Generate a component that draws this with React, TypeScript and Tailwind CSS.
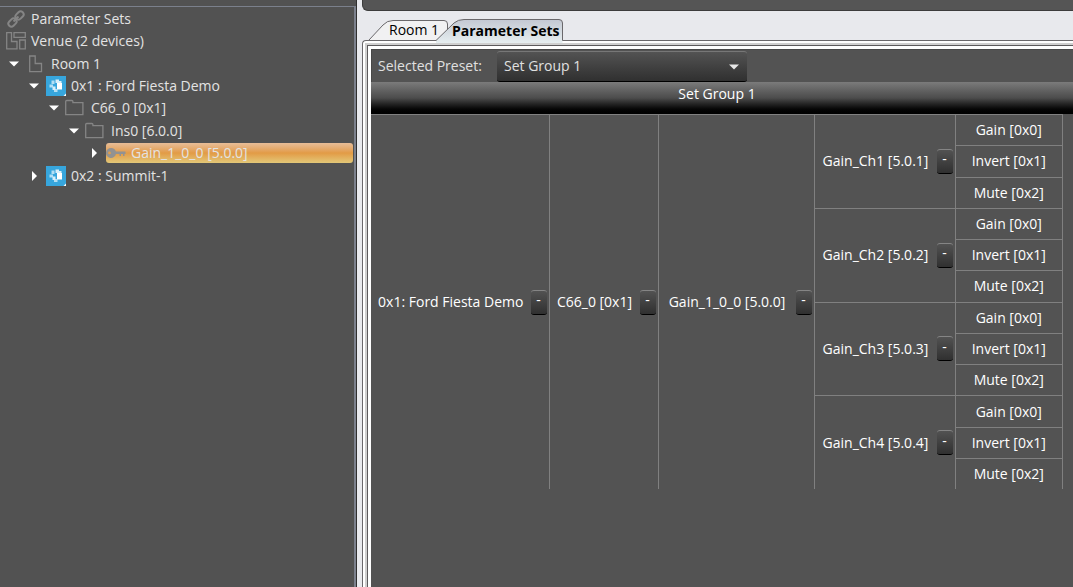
import type { ReactNode } from "react";

const channels = [
	{ name: "Gain_Ch1", address: "5.0.1" },
	{ name: "Gain_Ch2", address: "5.0.2" },
	{ name: "Gain_Ch3", address: "5.0.3" },
	{ name: "Gain_Ch4", address: "5.0.4" },
];

const parameters = ["Gain [0x0]", "Invert [0x1]", "Mute [0x2]"];

/* Icons */

function LinkIcon() {
	return (
		<svg width="20" height="20" viewBox="0 0 20 20" fill="none" stroke="#858585">
			<g transform="rotate(-45 10 10)" strokeWidth="2">
				<rect x="0.5" y="7" width="9" height="6" rx="3" />
				<rect x="10.5" y="7" width="9" height="6" rx="3" />
				<path d="M6.5 10h7" />
			</g>
		</svg>
	);
}

function VenueIcon() {
	return (
		<svg width="20" height="20" viewBox="0 0 20 20" fill="none" stroke="#858585" strokeWidth="1.3">
			<path d="M.7 1.7h4.8v8.8h5.500v7.300H.7z" />
			<path d="M8 1.700h11.300v4.600H8z" />
			<path d="M13.700 9h5.600v8.800h-5.600z" />
		</svg>
	);
}

function RoomIcon() {
	return (
		<svg width="20" height="20" viewBox="0 0 20 20" fill="none" stroke="#858585" strokeWidth="1.3">
			<path d="M5.700 2h5.500v7.500h6.300v8.200H5.700z" />
		</svg>
	);
}

function DeviceIcon() {
	return (
		<svg width="20" height="20" viewBox="0 0 20 20">
			<path fill="#37a6dd" d="M0 0h20v20H0z" />
			<path fill="#fff" d="M20 17.5V20h-2.500z" />
			<path fill="#b4dff4" d="M5.500 4.500h3v3.500h-3zM3.500 8.500h3.500v3H3.500zM8 13h3.500v3H8z" />
			<path fill="#d9effa" d="M9.500 3.500h3.500v3.500H9.500zM6.500 10.500h3v3.500h-3zM13 5h2.500v2H13z" />
			<path fill="#fff" d="M11 7h5v6.500h-5z" />
		</svg>
	);
}

function FolderIcon() {
	return (
		<svg width="20" height="20" viewBox="0 0 20 20" fill="none" stroke="#858585" strokeWidth="1.3">
			<path d="M1.700 3.500q0-1 1-1h5.200q1 0 1 1v1.200h10v12H1.700z" />
		</svg>
	);
}

function KeyIcon() {
	return (
		<svg width="20" height="20" viewBox="0 0 20 20" fill="#929292">
			<path
				fillRule="evenodd"
				d="M5.200 5a5 5 0 0 1 4.700 3.500H19.500v2.500h-1v2h-1.500v-2h-2v2h-1.500v-2H9.900A5 5 0 1 1 5.200 5zM3.500 8.500a1.400 1.400 0 1 0 0 2.800 1.400 1.400 0 0 0 0-2.800z"
			/>
		</svg>
	);
}

function Expander({ open }: { open: boolean }) {
	return (
		<button type="button" aria-label={open ? "Collapse" : "Expand"} className="w-5 shrink-0 flex justify-center">
			<svg width="12" height="12" viewBox="0 0 12 12" fill="#fff">
				{open ? <path d="M1 3.500h10L6 8.500z" /> : <path d="M4 1l5 5-5 5z" />}
			</svg>
		</button>
	);
}

/* Device tree */

function TreeRow({ icon, children }: { icon: ReactNode; children: ReactNode }) {
	return (
		<div className="flex items-center gap-[5px] h-[22px]">
			{icon}
			<span>{children}</span>
		</div>
	);
}

function DeviceTree() {
	return (
		<aside className="w-[357px] shrink-0 border-r border-[#2f2f2f] bg-[#525252] pt-1.5">
			<div className="h-full pt-px border-t border-r-2 border-[#7b808c] text-[#e3e3e3] whitespace-nowrap">
				<div className="pl-1.5">
					<TreeRow icon={<LinkIcon />}>Parameter Sets</TreeRow>
					<TreeRow icon={<VenueIcon />}>Venue (2 devices)</TreeRow>
				</div>
				<div className="flex items-center h-[23px] pl-1">
					<Expander open />
					<RoomIcon />
					<span className="pl-[7px]">Room 1</span>
				</div>
				<div className="flex items-center h-[22px] pl-6">
					<Expander open />
					<span className="pl-0.5"><DeviceIcon /></span>
					<span className="pl-[5px]">0x1 : Ford Fiesta Demo</span>
				</div>
				<div className="flex items-center h-[22px] pl-11">
					<Expander open />
					<FolderIcon />
					<span className="pl-[7px]">C66_0 [0x1]</span>
				</div>
				<div className="flex items-center h-[23px] pl-16">
					<Expander open />
					<FolderIcon />
					<span className="pl-[7px]">Ins0 [6.0.0]</span>
				</div>
				<div className="flex items-center h-[22px] pl-[84px]">
					<Expander open={false} />
					<div className="ml-0.5 mr-px flex-1 flex items-center gap-[5px] h-5 rounded-[3px] bg-linear-to-b from-[#e7bd98] via-[#e29b45] to-[#e2c878]">
						<KeyIcon />
						<span>Gain_1_0_0 [5.0.0]</span>
					</div>
				</div>
				<div className="flex items-center h-[23px] pl-6">
					<Expander open={false} />
					<span className="pl-0.5"><DeviceIcon /></span>
					<span className="pl-[5px]">0x2 : Summit-1</span>
				</div>
			</div>
		</aside>
	);
}

/* Tabs */

function Tabs() {
	return (
		<div role="tablist" className="flex items-end pl-1.5 h-[29px] text-black">
			<button type="button" role="tab" aria-selected={false} className="relative w-20 h-5 pl-[21px] text-left leading-5">
				<svg className="absolute inset-0 w-full h-full" viewBox="0 0 80 20" preserveAspectRatio="none" fill="#f1f1f2" stroke="#6a686b">
					<path d="M1 20L15 5Q19 .5 25 .5H76Q79.500 .5 79.500 4V20" />
				</svg>
				<span className="relative">Room 1</span>
			</button>
			<button type="button" role="tab" aria-selected className="relative z-10 -ml-3 -mb-[3px] w-[127px] h-6 pl-4 text-left leading-6 font-bold whitespace-nowrap">
				<svg className="absolute inset-0 w-full h-full" viewBox="0 0 127 24" preserveAspectRatio="none">
					<defs>
						<linearGradient id="tab" x1="0" x2="0" y1="0" y2="1">
							<stop offset="0" stopColor="#c3c8d2" />
							<stop offset="1" stopColor="#e6eef0" />
						</linearGradient>
					</defs>
					<path fill="url(#tab)" d="M0 24V21.500L18 4Q22 .5 28 .5H123Q126.500 .5 126.500 4V24z" />
					<path fill="none" stroke="#6a686b" d="M0 21.500L18 4Q22 .5 28 .5H123Q126.500 .5 126.500 4V21.500" />
				</svg>
				<span className="relative">Parameter Sets</span>
			</button>
		</div>
	);
}

/* Parameter table */

function CollapsibleCell({ children }: { children: ReactNode }) {
	return (
		<div className="flex items-center pr-0.5">
			<span className="flex-1 text-center">{children}</span>
			<button
				type="button"
				aria-label="Collapse"
				className="w-4 h-[25px] pb-1 flex items-center justify-center rounded-[3px] border-t border-t-[#858585] border-b border-b-black bg-linear-to-b from-[#525252] to-[#303030]"
			>
				-
			</button>
		</div>
	);
}

function ParameterTable() {
	return (
		<table className="w-[692px] h-[375px] table-fixed border-collapse border-t border-r border-[#808080] text-white whitespace-nowrap">
			<colgroup>
				<col className="w-[178px]" />
				<col className="w-[109px]" />
				<col className="w-[156px]" />
				<col className="w-[141px]" />
				<col />
			</colgroup>
			<tbody>
				{channels.map((channel, c) =>
					parameters.map((parameter, p) => (
						<tr key={channel.name + parameter}>
							{c === 0 && p === 0 && (
								<>
									<td rowSpan={12} className="p-0">
										<CollapsibleCell>0x1: Ford Fiesta Demo</CollapsibleCell>
									</td>
									<td rowSpan={12} className="p-0 border-l border-[#808080]">
										<CollapsibleCell>C66_0 [0x1]</CollapsibleCell>
									</td>
									<td rowSpan={12} className="p-0 border-l border-[#808080]">
										<CollapsibleCell>Gain_1_0_0 [5.0.0]</CollapsibleCell>
									</td>
								</>
							)}
							{p === 0 && (
								<td rowSpan={3} className="p-0 border-l border-t border-[#808080]">
									<CollapsibleCell>
										{channel.name} [{channel.address}]
									</CollapsibleCell>
								</td>
							)}
							<td className="p-0 border-l border-t border-[#808080] text-center">{parameter}</td>
						</tr>
					)),
				)}
			</tbody>
		</table>
	);
}

function PresetPanel() {
	return (
		<section className="flex-1 bg-[#535353]">
			<div className="flex items-center gap-3.5 h-[33px] pl-1.5 border-t border-l border-[#484848] text-[#e0e0e0]">
				<label htmlFor="preset" className="w-[105px] whitespace-nowrap">
					Selected Preset:
				</label>
				<div className="relative">
					<select
						id="preset"
						className="appearance-none w-[250px] h-[31px] pl-[7px] rounded-[3px] border-t border-t-[#777] border-b border-b-black bg-linear-to-b from-[#535353] to-[#303030]"
					>
						<option>Set Group 1</option>
					</select>
					<svg className="absolute right-2 top-3 pointer-events-none" width="10" height="8" viewBox="0 0 10 8" fill="#e6e6e6">
						<path d="M0 1.500h10L5 6.500z" />
					</svg>
				</div>
			</div>
			<div className="h-8 bg-linear-to-b from-[#7b7b7b] via-[#4c4c4c] to-black">
				<h1 className="w-[692px] text-center leading-6 text-white">Set Group 1</h1>
			</div>
			<ParameterTable />
		</section>
	);
}

export default function App() {
	return (
		<div className="flex min-h-screen bg-[#e8e9ed] font-['Open_Sans',sans-serif] text-[14px] leading-5">
			<DeviceTree />
			<main className="flex-1 min-w-0 flex flex-col pl-[5px] overflow-hidden">
				<div className="h-[11px] shrink-0 rounded-bl-md border-l border-b border-[#3c3c3c] bg-[#555]" />
				<Tabs />
				<div className="flex-1 flex border-l border-t border-[#6a686b] rounded-tl-[4px] bg-white pl-0.5 pt-0.5">
					<div className="flex-1 flex border-l-2 border-t-2 border-[#cfcfcf]">
						<div className="flex-1 flex border-l border-t border-[#5c5a5c] bg-white pl-[3px] pt-[3px]">
							<PresetPanel />
						</div>
					</div>
				</div>
			</main>
		</div>
	);
}
